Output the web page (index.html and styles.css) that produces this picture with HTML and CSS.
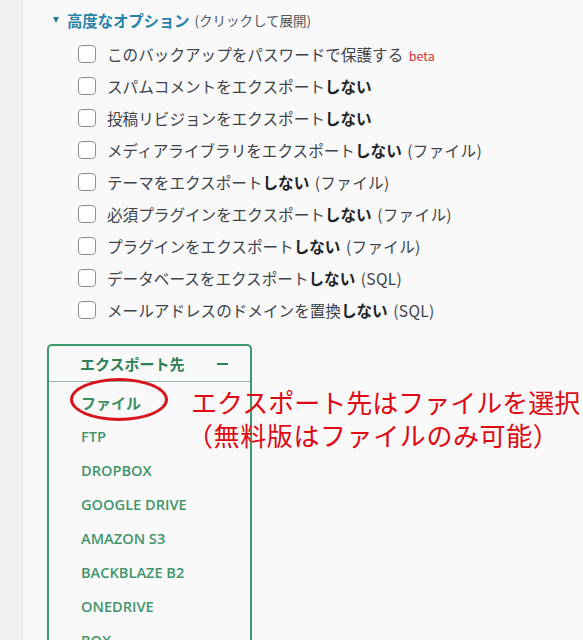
FILE: index.html
```html
<!DOCTYPE html>
<html lang="ja">
<head>
    <meta charset="UTF-8">
    <meta name="viewport" content="width=device-width, initial-scale=1.0">
    <title>エクスポート設定</title>
    <link rel="stylesheet" href="styles.css">
</head>
<body>
    <div class="page">
        <div class="sidebar"></div>
        <div class="main">
            <div class="advanced">
                <span class="arrow"></span>
                <span class="adv-title">高度なオプション</span>
                <span class="adv-hint">(クリックして展開)</span>
            </div>

            <ul class="options">
                <li><span class="check"></span><span>このバックアップをパスワードで保護する <span class="beta">beta</span></span></li>
                <li><span class="check"></span><span>スパムコメントをエクスポート<b>しない</b></span></li>
                <li><span class="check"></span><span>投稿リビジョンをエクスポート<b>しない</b></span></li>
                <li><span class="check"></span><span>メディアライブラリをエクスポート<b>しない</b> <span class="kind">(ファイル)</span></span></li>
                <li><span class="check"></span><span>テーマをエクスポート<b>しない</b> <span class="kind">(ファイル)</span></span></li>
                <li><span class="check"></span><span>必須プラグインをエクスポート<b>しない</b> <span class="kind">(ファイル)</span></span></li>
                <li><span class="check"></span><span>プラグインをエクスポート<b>しない</b> <span class="kind">(ファイル)</span></span></li>
                <li><span class="check"></span><span>データベースをエクスポート<b>しない</b> <span class="kind">(SQL)</span></span></li>
                <li><span class="check"></span><span>メールアドレスのドメインを置換<b>しない</b> <span class="kind">(SQL)</span></span></li>
            </ul>

            <div class="export-box">
                <div class="export-head">
                    <span>エクスポート先</span>
                    <span class="minus"></span>
                </div>
                <ul class="export-list">
                    <li class="selected"><span class="circle"></span>ファイル</li>
                    <li>FTP</li>
                    <li>DROPBOX</li>
                    <li>GOOGLE DRIVE</li>
                    <li>AMAZON S3</li>
                    <li>BACKBLAZE B2</li>
                    <li>ONEDRIVE</li>
                    <li>BOX</li>
                </ul>
            </div>
        </div>
    </div>

    <!-- 注釈 -->
    <div class="note">
        <div class="note-line">エクスポート先はファイルを選択</div>
        <div class="note-line second">（無料版はファイルのみ可能）</div>
    </div>
</body>
</html>
```

FILE: styles.css
```css
* {
    margin: 0;
    padding: 0;
    box-sizing: border-box;
}

body {
    font-family: 'Noto Sans CJK JP', 'Noto Sans', sans-serif;
    background: #f9f9f9;
    color: #3c434a;
    position: relative;
    overflow: hidden;
    height: 640px;
}

.page {
    display: flex;
    min-height: 640px;
}

.sidebar {
    width: 23px;
    flex-shrink: 0;
    background: #f1f1f1;
    border-right: 1px solid #e2e2e2;
}

.main {
    flex: 1;
}

.advanced {
    display: flex;
    align-items: center;
    height: 24px;
    margin-top: 8px;
    padding-left: 30px;
}

.arrow {
    width: 0;
    height: 0;
    border-left: 3.5px solid transparent;
    border-right: 3.5px solid transparent;
    border-top: 6px solid #2a7695;
    margin-right: 8px;
}

.adv-title {
    font-size: 15.5px;
    font-weight: 700;
    color: #2a83a6;
    letter-spacing: -0.2px;
}

.adv-hint {
    font-size: 13.5px;
    color: #50575e;
    margin-left: 5px;
}

.options {
    list-style: none;
    margin-top: 6px;
    padding-left: 55px;
}

.options li {
    display: flex;
    align-items: center;
    height: 32px;
    font-size: 15.6px;
}

.options b {
    color: #1d2327;
    font-weight: 700;
}

.kind {
    margin-left: 2px;
    letter-spacing: 0.3px;
}

.check {
    width: 18px;
    height: 18px;
    border: 1px solid #8c8f94;
    border-radius: 4px;
    background: #fff;
    margin-right: 11px;
    flex-shrink: 0;
}

.beta {
    color: #d63638;
    font-size: 12.5px;
    margin-left: 2px;
}

.export-box {
    margin: 18px 0 0 24px;
    width: 205px;
    border: 2px solid #3d9a6f;
    border-bottom: none;
    border-radius: 5px 5px 0 0;
    height: 300px;
}

.export-head {
    display: flex;
    align-items: center;
    justify-content: space-between;
    height: 36px;
    padding: 0 22px 0 31px;
    border-bottom: 1px solid #8fb7a4;
    font-size: 15px;
    font-weight: 700;
    color: #2f7f57;
}

.minus {
    width: 11px;
    height: 2px;
    background: #2f7f57;
}

.export-list {
    list-style: none;
    padding-top: 3px;
}

.export-list li {
    height: 34px;
    display: flex;
    align-items: center;
    padding-left: 32px;
    font-family: 'Open Sans', 'Noto Sans CJK JP', sans-serif;
    font-size: 14.6px;
    font-weight: 600;
    color: #43956b;
    position: relative;
}

.export-list li.selected {
    font-family: 'Noto Sans CJK JP', sans-serif;
    font-size: 15px;
    font-weight: 700;
    color: #3b8d62;
}

.circle {
    position: absolute;
    left: 21px;
    top: -7px;
    width: 98px;
    height: 43px;
    border: 3px solid #d8141c;
    border-radius: 50%;
}

.note {
    position: absolute;
    left: 191px;
    top: 385px;
    color: #dd0a14;
    font-size: 26px;
    line-height: 33px;
    white-space: nowrap;
}

.note-line.second {
    margin-left: -4px;
    letter-spacing: 0.6px;
}
```
